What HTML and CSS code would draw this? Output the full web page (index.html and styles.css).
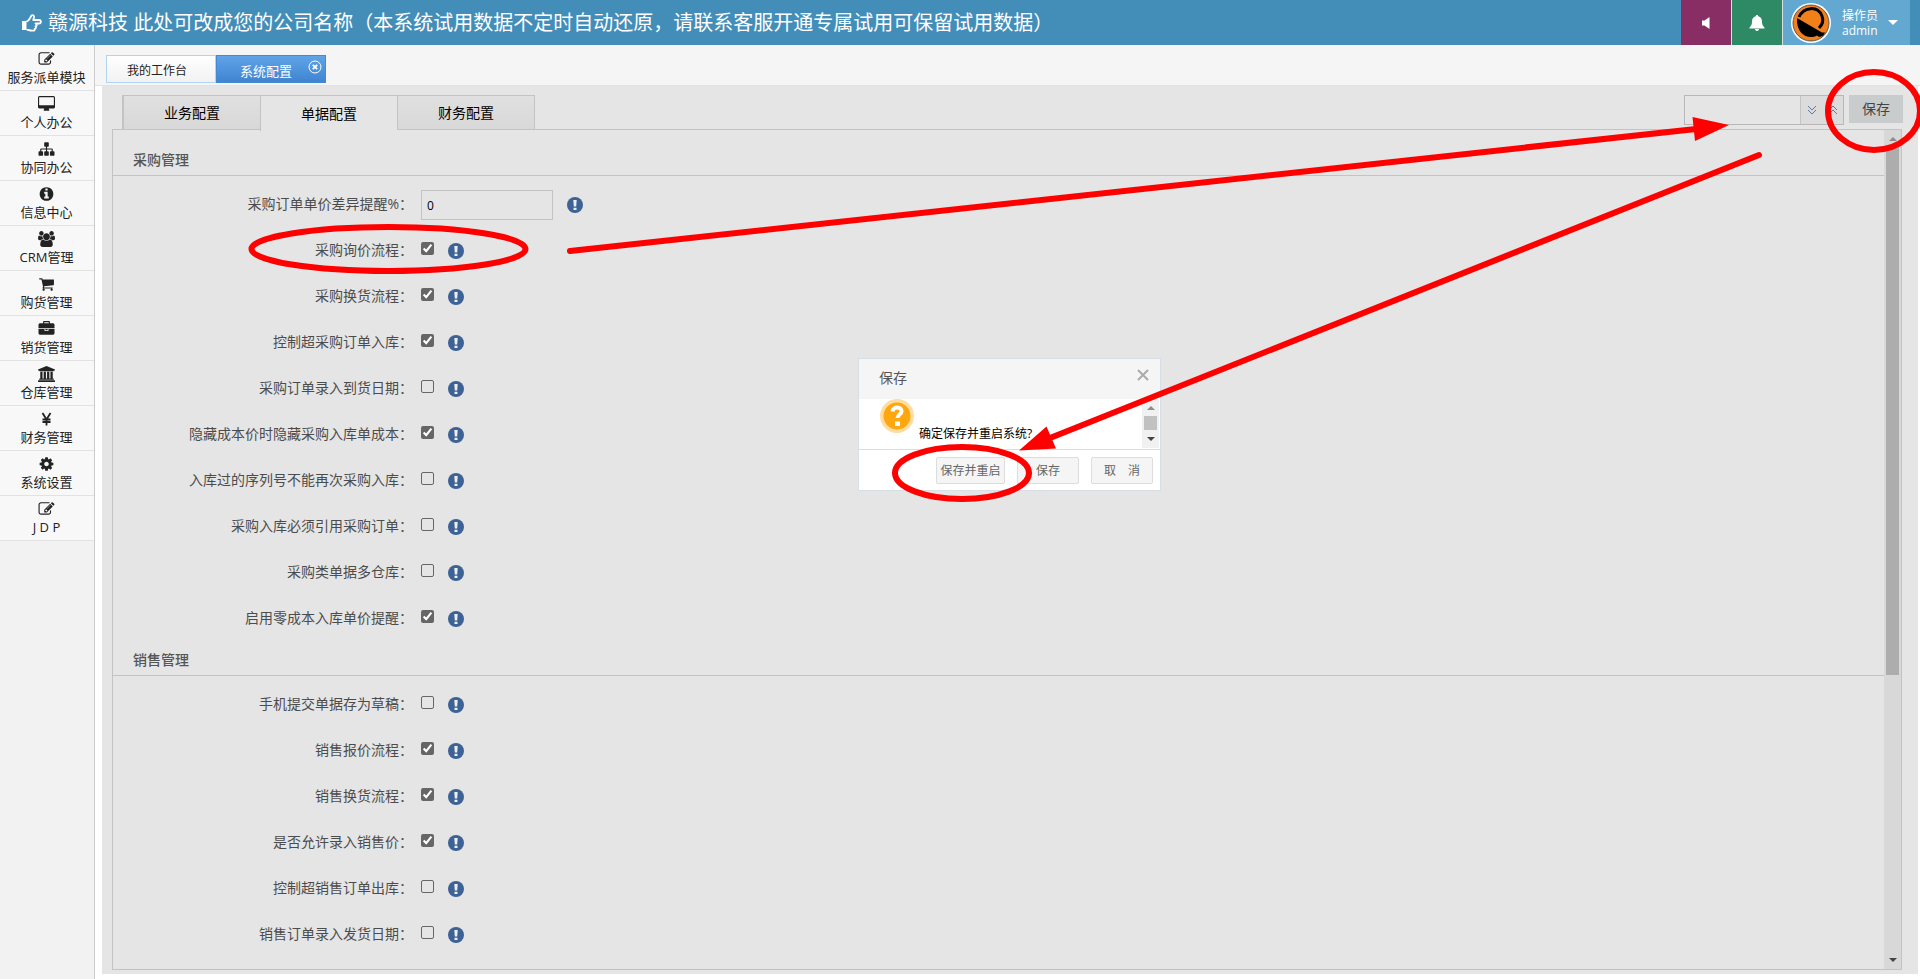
FILE: index.html
```html
<!DOCTYPE html>
<html lang="zh-CN">
<head>
<meta charset="utf-8">
<title>系统配置</title>
<link rel="stylesheet" href="styles.css">
</head>
<body>
<svg class="defs" aria-hidden="true">
  <symbol id="i-edit" viewBox="0 0 1792 1792"><path d="M888 1184l116-116-152-152-116 116v56h96v96h56zm440-720q-16-16-33 1l-350 350q-17 17-1 33t33-1l350-350q17-17 1-33zm80 594v190q0 119-84.5 203.5t-203.5 84.5h-832q-119 0-203.5-84.5t-84.5-203.5v-832q0-119 84.5-203.5t203.5-84.5h832q63 0 117 25 15 7 18 23 3 17-9 29l-49 49q-14 14-32 8-23-6-45-6h-832q-66 0-113 47t-47 113v832q0 66 47 113t113 47h832q66 0 113-47t47-113v-126q0-13 9-22l64-64q15-15 35-7t20 29zm-96-738l288 288-672 672h-288v-288zm444 132l-92 92-288-288 92-92q28-28 68-28t68 28l152 152q28 28 28 68t-28 68z"/></symbol>
  <symbol id="i-desktop" viewBox="-64 0 1920 1792"><path d="M1728 992v-832q0-13-9.5-22.5t-22.5-9.5h-1600q-13 0-22.5 9.5t-9.5 22.5v832q0 13 9.5 22.5t22.5 9.5h1600q13 0 22.5-9.5t9.5-22.5zm128-832v1088q0 66-47 113t-113 47h-544q0 37 16 77.5t32 71 16 43.5q0 26-19 45t-45 19h-512q-26 0-45-19t-19-45q0-14 16-44t32-70 16-78h-544q-66 0-113-47t-47-113v-1088q0-66 47-113t113-47h1600q66 0 113 47t47 113z"/></symbol>
  <symbol id="i-sitemap" viewBox="0 0 1792 1792"><path d="M1792 1248v320q0 40-28 68t-68 28h-320q-40 0-68-28t-28-68v-320q0-40 28-68t68-28h96v-192h-512v192h96q40 0 68 28t28 68v320q0 40-28 68t-68 28h-320q-40 0-68-28t-28-68v-320q0-40 28-68t68-28h96v-192h-512v192h96q40 0 68 28t28 68v320q0 40-28 68t-68 28h-320q-40 0-68-28t-28-68v-320q0-40 28-68t68-28h96v-192q0-52 38-90t90-38h512v-192h-96q-40 0-68-28t-28-68v-320q0-40 28-68t68-28h320q40 0 68 28t28 68v320q0 40-28 68t-68 28h-96v192h512q52 0 90 38t38 90v192h96q40 0 68 28t28 68z"/></symbol>
  <symbol id="i-info" viewBox="0 0 1792 1792"><path d="M1152 1376v-160q0-14-9-23t-23-9h-96v-512q0-14-9-23t-23-9h-320q-14 0-23 9t-9 23v160q0 14 9 23t23 9h96v320h-96q-14 0-23 9t-9 23v160q0 14 9 23t23 9h448q14 0 23-9t9-23zm-128-896v-160q0-14-9-23t-23-9h-192q-14 0-23 9t-9 23v160q0 14 9 23t23 9h192q14 0 23-9t9-23zm640 416q0 209-103 385.5t-279.5 279.5-385.5 103-385.5-103-279.5-279.5-103-385.5 103-385.5 279.5-279.5 385.5-103 385.5 103 279.5 279.5 103 385.5z"/></symbol>
  <symbol id="i-users" viewBox="0 0 1920 1792"><path d="M593 896q-162 5-265 128h-134q-82 0-138-40.5t-56-118.5q0-353 124-353 6 0 43.5 21t97.5 42.5 119 21.5q67 0 133-23-5 37-5 66 0 159 81 256zm1071 637q0 120-73 189.5t-194 69.5h-874q-121 0-194-69.5t-73-189.5q0-53 3.5-103.5t14-109 26.5-108.5 43-97.5 62-81 85.5-53.5 111.5-20q10 0 43 21.5t73 48 107 48 135 21.5 135-21.5 107-48 73-48 43-21.5q61 0 111.5 20t85.5 53.5 62 81 43 97.5 26.5 108.5 14 109 3.5 103.5zm-1024-1277q0 106-75 181t-181 75-181-75-75-181 75-181 181-75 181 75 75 181zm704 384q0 159-112.5 271.5t-271.5 112.5-271.5-112.5-112.5-271.5 112.5-271.5 271.5-112.5 271.5 112.5 112.5 271.5zm576 225q0 78-56 118.5t-138 40.5h-134q-103-123-265-128 81-97 81-256 0-29-5-66 66 23 133 23 59 0 119-21.5t97.5-42.5 43.5-21q124 0 124 353zm-128-609q0 106-75 181t-181 75-181-75-75-181 75-181 181-75 181 75 75 181z"/></symbol>
  <symbol id="i-cart" viewBox="0 0 1792 1792"><path d="M704 1536q0 52-38 90t-90 38-90-38-38-90 38-90 90-38 90 38 38 90zm896 0q0 52-38 90t-90 38-90-38-38-90 38-90 90-38 90 38 38 90zm128-1088v512q0 24-16.5 42.5t-40.5 21.5l-1044 122q13 60 13 70 0 16-24 64h920q26 0 45 19t19 45-19 45-45 19h-1024q-26 0-45-19t-19-45q0-11 8-31.5t16-36 21.5-40 15.5-29.5l-177-823h-204q-26 0-45-19t-19-45 19-45 45-19h256q16 0 28.5 6.5t19.5 15.5 13 24.5 8 26 5.5 29.5 4.5 26h1201q26 0 45 19t19 45z"/></symbol>
  <symbol id="i-briefcase" viewBox="0 0 1792 1792"><path d="M640 256h512v-128h-512v128zm1152 640v480q0 66-47 113t-113 47h-1472q-66 0-113-47t-47-113v-480h672v160q0 26 19 45t45 19h320q26 0 45-19t19-45v-160h672zm-768 0v128h-256v-128h256zm768-480v384h-1792v-384q0-66 47-113t113-47h352v-160q0-40 28-68t68-28h576q40 0 68 28t28 68v160h352q66 0 113 47t47 113z"/></symbol>
  <symbol id="i-bank" viewBox="0 0 1920 1792"><path d="M960 0l960 384v128h-128q0 26-20.5 45t-48.5 19h-1526q-28 0-48.5-19t-20.5-45h-128v-128zm-704 640h256v768h128v-768h256v768h128v-768h256v768h128v-768h256v768h59q28 0 48.5 19t20.5 45v64h-1664v-64q0-26 20.5-45t48.5-19h59v-768zm1595 960q28 0 48.5 19t20.5 45v128h-1920v-128q0-26 20.5-45t48.5-19h1782z"/></symbol>
  <symbol id="i-yen" viewBox="0 0 16 16"><path d="M4 2l4 6.500 4-6.500M8 8v6.500M4 8.500h8M4 11h8" fill="none" stroke="currentColor" stroke-width="1.800"/></symbol>
  <symbol id="i-cog" viewBox="0 0 1792 1792"><path d="M1152 896q0-106-75-181t-181-75-181 75-75 181 75 181 181 75 181-75 75-181zm512-109v222q0 12-8 23t-20 13l-185 28q-19 54-39 91 35 50 107 138 10 12 10 25t-9 23q-27 37-99 108t-94 71q-12 0-26-9l-138-108q-44 23-91 38-16 136-29 186-7 28-36 28h-222q-14 0-24.500-8.500t-11.500-21.500l-28-184q-49-16-90-37l-141 107q-10 9-25 9-14 0-25-11-126-114-165-168-7-10-7-23 0-12 8-23 15-21 51-66.500t54-70.500q-27-50-41-99l-183-27q-13-2-21-12.500t-8-23.500v-222q0-12 8-23t19-13l186-28q14-46 39-92-40-57-107-138-10-12-10-24 0-10 9-23 26-36 98.500-107.500t94.500-71.500q13 0 26 10l138 107q44-23 91-38 16-136 29-186 7-28 36-28h222q14 0 24.500 8.500t11.500 21.500l28 184q49 16 90 37l142-107q9-9 24-9 13 0 25 10 129 119 165 170 7 8 7 22 0 12-8 23-15 21-51 66.500t-54 70.500q26 50 41 98l183 28q13 2 21 12.500t8 23.500z"/></symbol>
  <symbol id="i-tip" viewBox="0 0 16 16"><circle cx="8" cy="8" r="8" fill="#3d6296"/><path d="M6.300 3h3.400l-.5 6.500H6.800zM6.500 10.700h3V13h-3z" fill="#eee"/></symbol>
</svg>

<header class="topbar">
  <h1 class="brand">
    <svg class="brand-icon" viewBox="0 0 20 20" aria-hidden="true"><path d="M0 8h4.500v9H0z"/><path d="M4.500 8.500C7 8 8 5 9.500 2.500c1.500-1 3 0 2.500 2L11.200 7H17c2.500 0 2.500 3.500 0 3.500h-3.500c1.700.3 1.700 2.500 0 2.800.8.600.6 2.300-.8 2.500.4 1.300-.5 1.900-1.700 1.900-3 0-4-.5-6.500-1.200" fill="none" stroke="currentColor" stroke-width="1.800" stroke-linejoin="round"/></svg>
    <span>赣源科技 此处可改成您的公司名称（本系统试用数据不定时自动还原，请联系客服开通专属试用可保留试用数据）</span>
  </h1>
  <nav class="tools">
    <button class="tool tool-sound" type="button" aria-label="声音"><svg width="10" height="14" viewBox="0 0 10 14"><path d="M1 4.500h2.500L8.500 1v12L3.500 9.500H1z" fill="currentColor"/></svg></button>
    <button class="tool tool-bell" type="button" aria-label="通知"><svg width="18" height="18" viewBox="0 0 18 18"><path d="M9 1c.8 0 1.200.5 1.200 1.200C13 2.800 14 5 14 7.500c0 3 .8 4.500 2.500 6v1H1.500v-1C3.200 12 4 10.500 4 7.500 4 5 5 2.800 7.800 2.200 7.800 1.500 8.200 1 9 1zM7 15h4c0 2.600-4 2.600-4 0z" fill="currentColor"/></svg></button>
    <button class="tool tool-user" type="button">
      <svg width="40" height="40" viewBox="0 0 40 40" aria-hidden="true"><circle cx="20" cy="20" r="20" fill="#fff"/><circle cx="20" cy="20" r="18" fill="#f2801a" stroke="#555"/><path d="M8 14C13 3 27 3 31 13c2 5 0 9-3 12" fill="none" stroke="#000" stroke-width="3"/><path d="M6 15l25 14.500h3L32 33l-4 1-2-1.500C18 37 5 32 6 15z" fill="#000"/></svg>
      <span class="who"><span>操作员</span><span>admin</span></span>
      <span class="caret"></span>
    </button>
  </nav>
</header>

<div class="shell">
  <nav class="side">
    <a href="#"><svg><use href="#i-edit"/></svg>服务派单模块</a>
    <a href="#"><svg><use href="#i-desktop"/></svg>个人办公</a>
    <a href="#"><svg><use href="#i-sitemap"/></svg>协同办公</a>
    <a href="#"><svg><use href="#i-info"/></svg>信息中心</a>
    <a href="#"><svg><use href="#i-users"/></svg>CRM管理</a>
    <a href="#"><svg><use href="#i-cart"/></svg>购货管理</a>
    <a href="#"><svg><use href="#i-briefcase"/></svg>销货管理</a>
    <a href="#"><svg><use href="#i-bank"/></svg>仓库管理</a>
    <a href="#"><svg><use href="#i-yen"/></svg>财务管理</a>
    <a href="#"><svg><use href="#i-cog"/></svg>系统设置</a>
    <a href="#"><svg><use href="#i-edit"/></svg>J D P</a>
  </nav>

  <main class="main">
    <div class="pages">
      <button class="page" type="button">我的工作台</button>
      <button class="page page-on" type="button">系统配置<svg class="page-close" viewBox="0 0 14 14" aria-hidden="true"><circle cx="7" cy="7" r="6"/><path d="M4.800 4.800l4.400 4.400M9.200 4.800l-4.400 4.400" stroke-width="1.800"/></svg></button>
    </div>

    <div class="work">
      <div class="bar">
        <div class="tabs">
          <button class="tab" type="button">业务配置</button>
          <button class="tab tab-on" type="button">单据配置</button>
          <button class="tab" type="button">财务配置</button>
        </div>
        <div class="actions">
          <div class="search">
            <input type="text" aria-label="查找">
            <button type="button" aria-label="下一个"><svg viewBox="0 0 10 12"><path d="M1 2l4 4 4-4M1 6l4 4 4-4"/></svg></button>
            <button type="button" aria-label="上一个"><svg viewBox="0 0 10 12"><path d="M1 6l4-4 4 4M1 10l4-4 4 4"/></svg></button>
          </div>
          <button class="save" type="button">保存</button>
        </div>
      </div>

      <div class="panel">
        <form class="scroll">
          <section>
            <h2>采购管理</h2>
            <div class="row"><label for="a1">采购订单单价差异提醒%：</label><input id="a1" class="text" type="text" value="0"><svg class="tip"><use href="#i-tip"/></svg></div>
            <div class="row"><label for="a2">采购询价流程：</label><input id="a2" type="checkbox" checked><svg class="tip"><use href="#i-tip"/></svg></div>
            <div class="row"><label for="a3">采购换货流程：</label><input id="a3" type="checkbox" checked><svg class="tip"><use href="#i-tip"/></svg></div>
            <div class="row"><label for="a4">控制超采购订单入库：</label><input id="a4" type="checkbox" checked><svg class="tip"><use href="#i-tip"/></svg></div>
            <div class="row"><label for="a5">采购订单录入到货日期：</label><input id="a5" type="checkbox"><svg class="tip"><use href="#i-tip"/></svg></div>
            <div class="row"><label for="a6">隐藏成本价时隐藏采购入库单成本：</label><input id="a6" type="checkbox" checked><svg class="tip"><use href="#i-tip"/></svg></div>
            <div class="row"><label for="a7">入库过的序列号不能再次采购入库：</label><input id="a7" type="checkbox"><svg class="tip"><use href="#i-tip"/></svg></div>
            <div class="row"><label for="a8">采购入库必须引用采购订单：</label><input id="a8" type="checkbox"><svg class="tip"><use href="#i-tip"/></svg></div>
            <div class="row"><label for="a9">采购类单据多仓库：</label><input id="a9" type="checkbox"><svg class="tip"><use href="#i-tip"/></svg></div>
            <div class="row"><label for="a10">启用零成本入库单价提醒：</label><input id="a10" type="checkbox" checked><svg class="tip"><use href="#i-tip"/></svg></div>
          </section>
          <section>
            <h2>销售管理</h2>
            <div class="row"><label for="b1">手机提交单据存为草稿：</label><input id="b1" type="checkbox"><svg class="tip"><use href="#i-tip"/></svg></div>
            <div class="row"><label for="b2">销售报价流程：</label><input id="b2" type="checkbox" checked><svg class="tip"><use href="#i-tip"/></svg></div>
            <div class="row"><label for="b3">销售换货流程：</label><input id="b3" type="checkbox" checked><svg class="tip"><use href="#i-tip"/></svg></div>
            <div class="row"><label for="b4">是否允许录入销售价：</label><input id="b4" type="checkbox" checked><svg class="tip"><use href="#i-tip"/></svg></div>
            <div class="row"><label for="b5">控制超销售订单出库：</label><input id="b5" type="checkbox"><svg class="tip"><use href="#i-tip"/></svg></div>
            <div class="row"><label for="b6">销售订单录入发货日期：</label><input id="b6" type="checkbox"><svg class="tip"><use href="#i-tip"/></svg></div>
          </section>
        </form>
        <div class="track"><span class="up"></span><span class="thumb"></span><span class="down"></span></div>
      </div>
    </div>
  </main>
</div>

<div class="dialog" role="dialog" aria-labelledby="dlg-title">
  <div class="dialog-head"><span id="dlg-title">保存</span><button type="button" aria-label="关闭"><svg viewBox="0 0 14 14"><path d="M2 2l10 10M12 2L2 12"/></svg></button></div>
  <div class="dialog-body">
    <svg class="ask" viewBox="0 0 34 34" aria-hidden="true"><circle cx="17" cy="17" r="17" fill="#ffdda0"/><circle cx="17" cy="17" r="13.500" fill="#ffa70f"/><path d="M12.500 12.500c.5-5.500 9.500-5 9 0-.2 3-4 3-4 6.500" fill="none" stroke="#fff" stroke-width="4"/><path d="M15 22.500h5V27h-5z" fill="#fff"/></svg>
    <p>确定保存并重启系统?</p>
    <div class="track track-light"><span class="up"></span><span class="thumb"></span><span class="down"></span></div>
  </div>
  <div class="dialog-foot"><button class="wide" type="button">保存并重启</button><button type="button">保存</button><button type="button">取　消</button></div>
</div>

<svg class="marks" viewBox="0 0 1920 979" aria-hidden="true">
  <g fill="none" stroke="#f00" stroke-width="6" stroke-linecap="round">
    <ellipse cx="388.500" cy="249" rx="137" ry="22"/>
    <ellipse cx="1874" cy="111" rx="46" ry="39"/>
    <ellipse cx="962" cy="473" rx="67" ry="26"/>
    <path d="M570 251L1696 129M1759 155L1050 438"/>
  </g>
  <path d="M1729 125L1692.500 117l2.500 24zM1019 450.500l27.500-24 9.500 22z" fill="#f00"/>
</svg>
</body>
</html>
```
FILE: styles.css
```css
* { box-sizing: border-box; }

body {
  margin: 0;
  height: 100vh;
  display: flex;
  flex-direction: column;
  position: relative;
  overflow: hidden;
  background: #fff;
  color: #222;
  font: 14px/20px "Open Sans", "Noto Sans CJK SC", sans-serif;
}

button, input { font: inherit; color: inherit; margin: 0; }
button { border: 0; padding: 0; background: none; }
svg { display: block; fill: currentColor; }
.defs { position: absolute; width: 0; height: 0; }

/* Top bar */
.topbar {
  display: flex;
  justify-content: space-between;
  height: 45px;
  flex: none;
  padding: 0 10px 0 22px;
  background: #438eb9;
  color: #fff;
}
.brand {
  display: flex;
  align-items: center;
  gap: 6px;
  margin: 0;
  font-size: 20px;
  font-weight: 400;
  line-height: 44px;
  white-space: nowrap;
}
.brand-icon { width: 20px; height: 20px; }
.tools { display: flex; gap: 1px; background: #ddd; }
.tool { display: flex; align-items: center; justify-content: center; width: 50px; color: #fff; }
.tool-sound { background: #892e65; }
.tool-bell { background: #2e8965; }
.tool-user { width: 127px; padding: 0 12px 0 8px; justify-content: flex-start; background: #62a8d1; }
.who { display: flex; flex-direction: column; margin: 0 10px 0 11px; font-size: 12px; line-height: 15px; text-align: left; }
.caret { border: 5px solid transparent; border-top-color: #fff; border-bottom: 0; }

.shell { display: flex; flex: 1; min-height: 0; }

/* Module menu */
.side { width: 95px; flex: none; padding-top: 1px; background: #f2f2f2; border-right: 1px solid #ccc; }
.side a {
  display: flex;
  flex-direction: column;
  align-items: center;
  height: 45px;
  padding: 5px 1px 0 0;
  border-bottom: 1px solid #e2e2e2;
  background: #f8f8f8;
  color: #222;
  font-size: 13px;
  line-height: 20px;
  text-decoration: none;
}
.side svg { width: 17px; height: 16px; }

.main { display: flex; flex: 1; flex-direction: column; min-width: 0; }
.pages { display: flex; flex: none; height: 41px; padding: 10px 11px; background: #f5f5f5; border-bottom: 1px solid #e2e2e2; }
.page { position: relative; width: 110px; height: 28px; padding: 3px 8px 0 0; border: 1px solid #b0d4f1; background: linear-gradient(#fff, #f2f2f2); font-size: 12px; }
.page-on { padding-right: 10px; border-color: #438ad6; background: linear-gradient(#5fa4e8, #4084d0); color: #fff; font-size: 13px; }
.page-close { position: absolute; top: 4px; right: 3px; width: 14px; height: 14px; fill: none; stroke: #fff; stroke-width: 1; }

/* Work area */
.work { display: flex; flex: 1; flex-direction: column; min-height: 0; margin: 0 2px 5px 7px; padding: 9px 16px 4px 10px; background: #e5e5e5; }
.bar { display: flex; flex: none; justify-content: space-between; height: 34px; padding-left: 10px; margin-right: -1px; }
.tabs { display: flex; position: relative; z-index: 1; height: 35px; border-left: 1px solid #c3c3c3; }
.tab { width: 137px; height: 35px; border: 1px solid #c3c3c3; border-right-width: 0; background: linear-gradient(#e0e0e0, #d8d8d8); color: #000; font-size: 14px; }
.tab:last-child { width: 138px; border-right-width: 1px; }
.tab-on { height: 36px; border-bottom: 0; background: #e5e5e5; }
.actions { display: flex; align-items: flex-start; gap: 5px; }
.search { display: flex; height: 30px; border: 1px solid #b8b8b8; background: #dcdcdc; }
.search input { width: 116px; border: 0; border-right: 1px solid #c3c3c3; background: #e5e5e5; }
.search button { width: 21px; }
.search svg { width: 10px; height: 12px; margin: 0 auto; fill: none; stroke: #5e7a99; }
.save { width: 54px; height: 28px; background: #c9cccd; color: #444; }

.panel { display: flex; flex: 1; min-height: 0; border: 1px solid #c3c3c3; }
.scroll { flex: 1; overflow: hidden; padding-top: 15px; }
section { padding-bottom: 4px; }
h2 { margin: 0 0 5px; padding: 5px 20px; border-bottom: 1px solid #c3c3c3; color: #555; font-size: 14px; font-weight: 500; line-height: 20px; }
.row { display: flex; align-items: center; height: 46px; color: #4c4c4c; }
.row label { width: 300px; text-align: right; }
.row input[type="checkbox"] { width: 13px; height: 13px; margin: 0 14px 4px 8px; accent-color: #666; }
.row input[type="checkbox"]:not(:checked) { appearance: none; border: 1px solid #666; border-radius: 2px; }
.row .text { width: 132px; height: 30px; margin: 2px 14px 0 8px; padding: 0 5px; border: 1px solid #c3c3c3; background: #e5e5e5; color: #000; font-size: 12px; }
.tip { width: 16px; height: 16px; margin-top: 2px; }

/* Drawn scroll bars */
.track { display: flex; flex: none; flex-direction: column; align-items: center; width: 17px; padding: 7px 0; background: #d8d8d8; }
.up { border: 4px solid transparent; border-top: 0; border-bottom-color: #8c8c8c; }
.down { margin-top: auto; border: 4px solid transparent; border-bottom: 0; border-top-color: #444; }
.thumb { width: 13px; height: 64%; margin-top: 6px; background: #adadad; }

/* Confirmation */
.dialog { position: absolute; top: 358px; left: calc(50% - 102px); width: 303px; border: 1px solid #d8dee6; background: #fff; }
.dialog-head { display: flex; justify-content: space-between; height: 40px; padding: 9px 10px 0 20px; background: #f5f5f5; color: #555; }
.dialog-head button { width: 14px; height: 14px; }
.dialog-head svg { width: 14px; height: 14px; fill: none; stroke: #aaa; stroke-width: 2; }
.dialog-body { display: flex; align-items: flex-start; height: 51px; padding-left: 21px; border-bottom: 1px solid #d8dee6; }
.ask { width: 34px; height: 34px; }
.dialog-body p { flex: 1; margin: 25px 0 0 5px; color: #000; font-size: 12px; }
.track-light { height: 49px; margin-right: 1px; background: #f1f1f1; }
.track-light .thumb { height: 14px; background: #c1c1c1; }
.dialog-foot { display: flex; justify-content: flex-end; gap: 12px; padding: 7px 7px 6px; }
.dialog-foot button { width: 62px; height: 27px; border: 1px solid #ddd; border-radius: 2px; background: #f5f5f5; color: #666; font-size: 12px; }
.dialog-foot .wide { width: 69px; }

.marks { position: absolute; inset: 0; width: 100%; height: 100%; pointer-events: none; }
```
